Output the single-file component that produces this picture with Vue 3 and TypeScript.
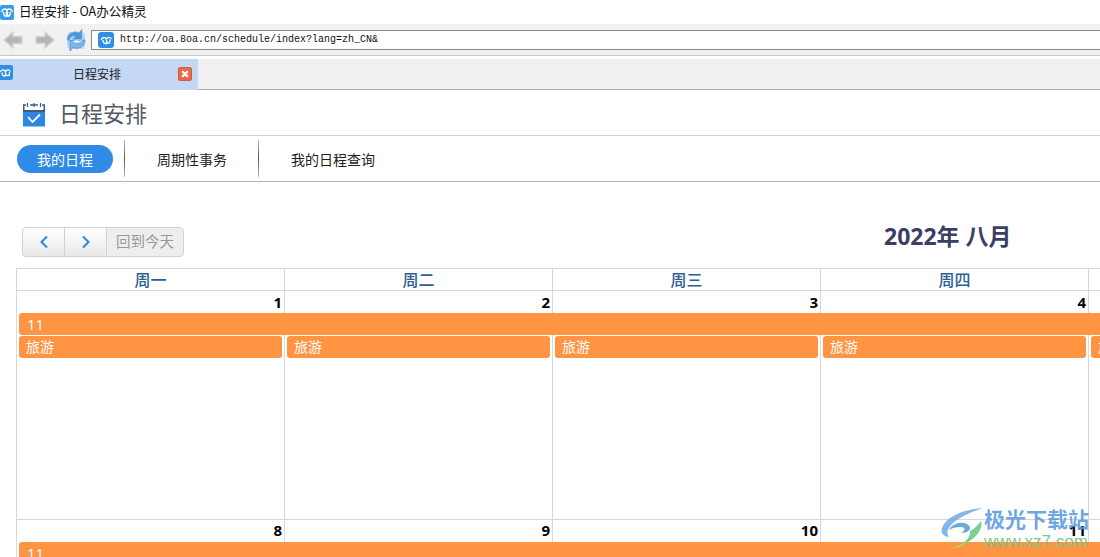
<script setup lang="ts">
const days = ['周一', '周二', '周三', '周四', '']
const firstWeek = ['1', '2', '3', '4', '']
const secondWeek = ['8', '9', '10', '11', '']
</script>

<template>
  <div class="page">
    <header class="titlebar">
      <svg class="logo" width="14" height="15" viewBox="0 0 14 15"><rect width="14" height="15" rx="2" fill="#3a9bea"/><path d="M1.500 7C2.500 3.500 6 3 7 5.500 8 3 11.500 3.500 12.500 7M3.500 7c0 3.500 1.500 4.500 3 4V6.500M7.500 6.500V11c1.500.5 3-.5 3-4" fill="none" stroke="#fff" stroke-width="1.500"/></svg>
      <span class="title-text">日程安排 - OA办公精灵</span>
    </header>

    <div class="toolbar">
      <svg class="nav-arrow" width="20" height="20" viewBox="0 0 20 20"><path d="M1 10l9-8v4.500h9v7h-9V18z" fill="#b4b4b4" stroke="#d4d4d4" stroke-width="1.500"/></svg>
      <svg class="nav-arrow next" width="20" height="20" viewBox="0 0 20 20"><path d="M19 10l-9-8v4.500H1v7h9V18z" fill="#b4b4b4" stroke="#d4d4d4" stroke-width="1.500"/></svg>
      <svg class="refresh" width="20" height="24" viewBox="0 0 20 24">
        <rect x="1" y="4" width="18" height="17" rx="4" fill="#bcd8f2"/>
        <path d="M1 12C1 6 7 2 13 4.500L16 1v10.500H6l3-3C6.500 7.500 4 9 3.500 13z" fill="#4f93d6" stroke="#8fbce8" stroke-width=".8"/>
        <path d="M19 12c0 6-6 10-12 7.500L4 23V12.500h10l-3 3c2.500 1 5-.5 5.500-3.500z" fill="#7fb6ea" stroke="#4f93d6" stroke-width=".8"/>
        <path d="M7 13c2-1 5-1 7 0-1 2-5 2.500-7 0z" fill="#fff"/>
      </svg>
      <div class="address">
        <svg class="logo-small" width="16" height="16" viewBox="0 0 16 16"><rect width="16" height="16" rx="3" fill="#2f8fe6"/><path d="M3 8C4.500 4.500 8 5 8.500 7.500 9 5 12 4.500 13.500 7M5 8c0 3 1.500 4 3.500 3.500V8M8.500 8c0 3 1.500 3.500 3 3 .5-1 .6-2 .3-3.500" fill="none" stroke="#fff" stroke-width="1.300"/></svg>
        <span class="url">http://oa.8oa.cn/schedule/index?lang=zh_CN&amp;</span>
      </div>
    </div>

    <div class="tabbar">
      <div class="tab">
        <svg class="tab-logo" width="13" height="15" viewBox="0 0 13 15"><path d="M0 0h11a2 2 0 012 2v11a2 2 0 01-2 2H0z" fill="#2f8fe6"/><path d="M0 7c2-3 5-2.500 5.500 0C6 4.500 9 4 10.500 6.500M2 7.500c0 3 2 4 3.500 3.500V7.500M5.500 7.500c0 3 2 3.500 3.500 3 .5-1 .6-2 .3-3.500" fill="none" stroke="#fff" stroke-width="1.300"/></svg>
        <span class="tab-text">日程安排</span>
        <svg class="tab-close" width="14" height="14" viewBox="0 0 14 14"><rect x=".5" y=".5" width="13" height="13" rx="1.500" fill="#e8694a" stroke="#d9593f"/><path d="M4.200 4.200l5.600 5.600m0-5.600l-5.600 5.600" stroke="#fff" stroke-width="2.200"/></svg>
      </div>
    </div>

    <div class="app-head">
      <svg class="cal-icon" width="24" height="25" viewBox="0 0 24 25">
        <path d="M1 3h3M8 3h8M20 3h3" stroke="#3d5a80" stroke-width="1.500"/>
        <path d="M5.500 1v4M18.500 1v4M12 1v4" stroke="#3d5a80" stroke-width="1.200"/>
        <rect x="1" y="3" width="1.500" height="6" fill="#3d5a80"/><rect x="21.500" y="3" width="1.500" height="6" fill="#3d5a80"/>
        <rect x="1" y="8" width="22" height="2" fill="#3d5a80"/>
        <rect y="10" x="1" width="22" height="14.500" fill="#2f86e0"/>
        <path d="M6 15l4.500 5L18 12.500" fill="none" stroke="#fff" stroke-width="1.800"/>
      </svg>
      <h1 class="app-title">日程安排</h1>
    </div>

    <nav class="tabs">
      <a class="pill">我的日程</a>
      <i class="sep sep-one"></i>
      <a class="nav-link link-one">周期性事务</a>
      <i class="sep sep-two"></i>
      <a class="nav-link link-two">我的日程查询</a>
    </nav>

    <section class="cal-tools">
      <div class="btn-group">
        <button class="btn arrow-btn"><svg width="12" height="14" viewBox="0 0 12 14"><path d="M9 1.500L3.500 7 9 12.500" fill="none" stroke="#2f86e0" stroke-width="2"/></svg></button>
        <button class="btn arrow-btn"><svg width="12" height="14" viewBox="0 0 12 14"><path d="M3 1.500L8.500 7 3 12.500" fill="none" stroke="#2f86e0" stroke-width="2"/></svg></button>
        <button class="btn today">回到今天</button>
      </div>
      <h2 class="month">2022年 八月</h2>
    </section>

    <section class="calendar">
      <div class="row head">
        <div v-for="(d, i) in days" :key="i" class="cell head-cell">{{ d }}</div>
      </div>
      <div class="week">
        <div class="row dates">
          <div v-for="(d, i) in firstWeek" :key="i" class="cell date-cell">{{ d }}</div>
        </div>
        <div class="banner">11</div>
        <div class="row events">
          <div v-for="(d, i) in firstWeek" :key="i" class="cell event-cell">
            <div class="event">旅游</div>
          </div>
        </div>
      </div>
      <div class="week second">
        <div class="row dates">
          <div v-for="(d, i) in secondWeek" :key="i" class="cell date-cell">{{ d }}</div>
        </div>
        <div class="banner">11</div>
      </div>
    </section>

    <div class="watermark">
      <svg class="wm-logo" width="43" height="42" viewBox="0 0 43 42">
        <path d="M42 1C26 2 6 8 1 21c-2 6 3 9 7 9C3 24 9 12 42 1z" fill="#79aee3" opacity=".9"/>
        <path d="M8 23c3-8 18-10 21-3 1 3-3 6-9 6 4-2 5-6 0-6-5 0-9 1-12 3z" fill="#5e9edc" opacity=".9"/>
        <path d="M40 14c3 10-10 24-30 27 13-4 20-10 19-17 4-2 8-6 11-10z" fill="#6fcb8a" opacity=".92"/>
        <path d="M10 41c7-1 13-4 17-8-4 5-9 8-17 8z" fill="#e8df6e"/>
      </svg>
      <div class="wm-text">
        <span class="wm-cn">极光下载站</span>
        <span class="wm-url">www.xz7.com</span>
      </div>
    </div>
  </div>
</template>

<style>
html, body { margin: 0; padding: 0; overflow: hidden; background: #fff; }
</style>

<style scoped>
.page {
  position: relative;
  width: 1100px;
  height: 557px;
  overflow: hidden;
  background: #fff;
  font-family: "Noto Sans CJK SC", "Open Sans", sans-serif;
  color: #000;
}
.titlebar {
  height: 24px;
  display: flex;
  align-items: center;
  gap: 5px;
  box-sizing: border-box;
  padding-bottom: 1px;
}
.logo { flex: none; margin-top: 2px; }
.title-text { font-size: 12.600px; color: #111; line-height: 1; }
.toolbar {
  height: 32px;
  background: #f1f1f1;
  display: flex;
  align-items: center;
  box-sizing: border-box;
  border-bottom: 1px solid #c8c8c8;
  padding-left: 3px;
}
.nav-arrow { flex: none; }
.next { margin-left: 12px; }
.refresh { margin-left: 11px; flex: none; }
.address {
  margin-left: 5px;
  width: 1020px;
  height: 20px;
  flex: none;
  box-sizing: border-box;
  background: #fff;
  border: 1px solid #888;
  display: flex;
  align-items: center;
  padding-left: 6px;
  gap: 6px;
}
.url { font-family: "Liberation Mono", "DejaVu Sans Mono", monospace; font-size: 10px; color: #111; white-space: nowrap; }
.tabbar {
  margin-top: 3px;
  height: 31px;
  box-sizing: border-box;
  background: #f0f0f0;
  border-bottom: 1px solid #a8a8a8;
}
.tab {
  position: relative;
  width: 198px;
  height: 31px;
  background: #c4d8f3;
  display: flex;
  align-items: center;
  justify-content: center;
}
.tab-logo { position: absolute; left: 0; top: 6px; }
.tab-close { position: absolute; left: 178px; top: 8px; }
.tab-text { font-size: 12px; color: #222; margin-right: 4px; margin-top: -1px; line-height: 1; }
.app-head {
  height: 46px;
  box-sizing: border-box;
  border-bottom: 1px solid #d0d0d0;
  display: flex;
  align-items: center;
  padding-left: 22px;
  gap: 13px;
}
.cal-icon { flex: none; margin-top: 4px; }
.app-title { margin: -2px 0 0; font-weight: 400; font-size: 22px; color: #555b66; line-height: 1; }
.tabs {
  height: 46px;
  box-sizing: border-box;
  border-bottom: 1px solid #b4b4b4;
  display: flex;
  align-items: center;
  padding-left: 17px;
}
.pill {
  width: 96px;
  height: 28px;
  line-height: 28px;
  text-align: center;
  border-radius: 14px;
  background: #2f8be6;
  color: #fff;
  font-size: 14px;
}
.sep { display: block; width: 1px; height: 37px; background: linear-gradient(#bbb, #555 50%, #bbb); flex: none; }
.sep-one { margin-left: 11px; }
.nav-link { font-size: 14px; color: #222; line-height: 1; white-space: nowrap; }
.link-one { margin-left: 32px; width: 70px; }
.sep-two { margin-left: 31px; }
.link-two { margin-left: 32px; }
.cal-tools {
  position: relative;
  height: 86px;
  padding: 45px 0 0 22px;
  box-sizing: border-box;
  display: flex;
  align-items: flex-start;
}
.btn-group {
  display: flex;
  height: 30px;
  box-sizing: border-box;
  border: 1px solid #d2d2d2;
  border-radius: 4px;
  overflow: hidden;
  background: linear-gradient(#fff, #e8e8e8);
}
.btn {
  border: 0;
  padding: 0;
  margin: 0;
  background: transparent;
  font-family: inherit;
  display: flex;
  align-items: center;
  justify-content: center;
}
.arrow-btn { width: 42px; border-right: 1px solid #d2d2d2; }
.today { width: 76px; background: #eeeeee; color: #999; font-size: 14.500px; padding-bottom: 3px; }
.month {
  margin: -6px 0 0 700px;
  font-family: "Open Sans", "Noto Sans CJK SC", sans-serif;
  font-weight: 700;
  font-size: 23px;
  line-height: 30px;
  color: #3b3f63;
  white-space: nowrap;
}
.calendar {
  margin-left: 16px;
  width: 1340px;
  border-left: 1px solid #d8d8d8;
  box-sizing: border-box;
}
.row { display: grid; grid-template-columns: repeat(5, 268px); }
.cell { box-sizing: border-box; border-right: 1px solid #d8d8d8; }
.head { height: 23px; border-top: 1px solid #d8d8d8; border-bottom: 1px solid #d8d8d8; box-sizing: border-box; }
.head-cell { text-align: center; color: #2f5f94; font-size: 16px; font-weight: 500; line-height: 21px; }
.week { position: relative; height: 229px; border-bottom: 1px solid #d8d8d8; box-sizing: border-box; }
.dates { height: 22px; }
.date-cell {
  text-align: right;
  padding-right: 2px;
  font-family: "Open Sans", sans-serif;
  font-weight: 700;
  font-size: 15px;
  line-height: 22px;
  height: 229px;
}
.second .date-cell { line-height: 20px; }
.banner {
  position: absolute;
  left: 2px;
  right: 0;
  top: 22px;
  height: 22px;
  background: #ff9442;
  border-radius: 3px 0 0 3px;
  color: #fff;
  font-family: "Open Sans", sans-serif;
  font-size: 15px;
  line-height: 23px;
  padding-left: 8px;
}
.events { position: absolute; left: 0; top: 45px; }
.event-cell { border-right-color: transparent; padding: 0 2px; }
.event {
  height: 22px;
  background: #ff9442;
  border-radius: 3px;
  color: #fff;
  font-size: 14px;
  line-height: 21px;
  padding-left: 7px;
}
.watermark {
  position: absolute;
  left: 941px;
  top: 506px;
  display: flex;
  pointer-events: none;
}
.wm-logo { flex: none; margin-top: 1px; }
.wm-text { display: flex; flex-direction: column; }
.wm-cn { font-size: 21px; font-weight: 700; color: rgba(91, 155, 222, .9); line-height: 25px; white-space: nowrap; }
.wm-url { font-family: "Liberation Sans", sans-serif; font-size: 17px; color: rgba(120, 195, 130, .95); line-height: 22px; }
</style>
